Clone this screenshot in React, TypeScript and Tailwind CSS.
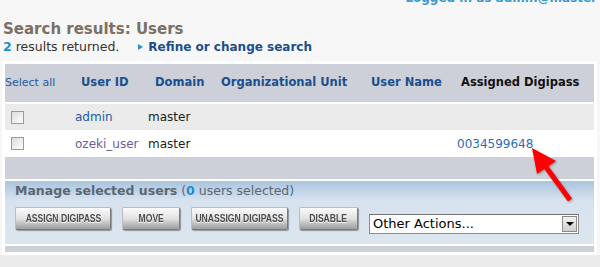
import React from "react";

const BUTTONS = [
  { label: "ASSIGN DIGIPASS", w: "w-[96px]" },
  { label: "MOVE", w: "w-[58px]" },
  { label: "UNASSIGN DIGIPASS", w: "w-[97px]" },
  { label: "DISABLE", w: "w-[59px]" },
];

function Checkbox() {
  return (
    <span className="inline-block w-[13px] h-[13px] border border-[#9a9a9a] bg-gradient-to-br from-[#dcdcdc] to-[#ffffff]" />
  );
}

function Arrow() {
  return (
    <svg
      className="absolute left-[525px] top-[142px]"
      width="56"
      height="66"
      viewBox="525 142 56 66"
    >
      <g style={{ filter: "drop-shadow(1px 1px 1px rgba(0,0,0,0.35))" }}>
        <line x1="570" y1="200" x2="543" y2="163" stroke="#ff0000" strokeWidth="5" />
        <polygon points="532,148 556,161 537,174" fill="#ff0000" />
      </g>
    </svg>
  );
}

export default function App() {
  return (
    <div className="relative w-[600px] h-[267px] overflow-hidden bg-[#f7f7f7] font-['DejaVu_Sans',Verdana,sans-serif]">
      {/* Logged in */}
      <div className="flex justify-end pr-[3px] h-[14px]">
        <span className="-mt-[9px] text-[12px] font-bold text-[#3a9bd1] leading-[14px]">
          Logged in as admin@master
        </span>
      </div>

      {/* Title */}
      <div className="pl-[3px] mt-[5px] text-[15px] font-bold text-[#7a7064] leading-[20px]">
        Search results: Users
      </div>
      <div className="pl-[3px] flex items-center text-[12.5px] leading-[16px] text-[#333]">
        <span className="font-bold text-[#1a8fd0]">2</span>
        <span>&nbsp;results returned.</span>
        <span className="ml-[19px] mr-[5px] w-0 h-0 border-y-[3px] border-y-transparent border-l-[5px] border-l-[#2a8fd0]" />
        <span className="font-bold text-[12px] text-[#1b4f8c]">Refine or change search</span>
      </div>

      {/* Table */}
      <div className="mt-[6px] ml-[2px] w-[595px] bg-white p-[3px] flex flex-col">
        <div className="h-[38px] bg-[#cdd0d9] flex items-center text-[11.5px] font-bold text-[#1b4f8c]">
          <span className="w-[76px] text-[11px] font-normal text-[#1d5aa0]">Select all</span>
          <span className="w-[74px]">User ID</span>
          <span className="w-[66px]">Domain</span>
          <span className="w-[150px]">Organizational Unit</span>
          <span className="w-[90px]">User Name</span>
          <span className="text-[#111]">Assigned Digipass</span>
        </div>
        <div className="h-[2px]" />
        <div className="h-[26px] bg-[#ebebeb] flex items-center text-[12px] text-[#222]">
          <span className="w-[70px] pl-[6px] flex"><Checkbox /></span>
          <span className="w-[73px] text-[#1f5ca3]">admin</span>
          <span>master</span>
        </div>
        <div className="h-[27px] bg-white flex items-center text-[12px] text-[#222]">
          <span className="w-[70px] pl-[6px] flex"><Checkbox /></span>
          <span className="w-[73px] text-[#6a5c9c]">ozeki_user</span>
          <span className="w-[309px]">master</span>
          <span className="text-[#2b6db3]">0034599648</span>
        </div>
        <div className="h-[22px] bg-[#cdd0d9]" />
        <div className="h-[2px]" />

        {/* Manage section */}
        <div className="h-[63px] bg-gradient-to-b from-[#a9c4dd] via-[#d6e2ee] via-30% to-[#dce6ef] pl-[10px] flex flex-col">
          <div className="mt-[2px] text-[12.5px] leading-[16px] text-[#5a6776]">
            <span className="font-bold">Manage selected users</span>
            <span> (</span>
            <span className="font-bold text-[#1a8fd0]">0</span>
            <span> users selected)</span>
          </div>
          <div className="mt-[8px] flex items-start">
            {BUTTONS.map((b) => (
              <div
                key={b.label}
                className={`${b.w} mr-[11px] h-[23px] flex items-center justify-center rounded-[2px] border border-[#7a7a7a] border-t-[#bcbcbc] border-l-[#bcbcbc] bg-gradient-to-b from-[#fbfbfb] via-[#e2e2e2] to-[#9e9e9e] shadow-[1px_1px_1px_rgba(0,0,0,0.35)]`}
              >
                <span className="whitespace-nowrap scale-x-[0.78] text-[11px] font-bold text-[#4a4a4a] font-['Liberation_Sans',Arial,sans-serif] [text-shadow:0_1px_0_#fff]">
                  {b.label}
                </span>
              </div>
            ))}
            <div className="mt-[7px] w-[210px] h-[20px] bg-white border border-[#8c8c8c] border-t-[#6f6f6f] flex items-center justify-between">
              <span className="pl-[3px] text-[13px] text-black">Other Actions...</span>
              <span className="mr-[1px] w-[15px] h-[16px] border border-[#8a8a8a] bg-gradient-to-b from-[#f2f2f2] to-[#cfcfcf] flex items-center justify-center">
                <span className="w-0 h-0 border-x-[4px] border-x-transparent border-t-[4px] border-t-black" />
              </span>
            </div>
          </div>
        </div>
        <div className="h-[2px]" />
        <div className="h-[6px] bg-[#cdd0d9]" />
      </div>
      <div className="h-[20px] bg-[#ebebeb]" />

      <Arrow />
    </div>
  );
}
